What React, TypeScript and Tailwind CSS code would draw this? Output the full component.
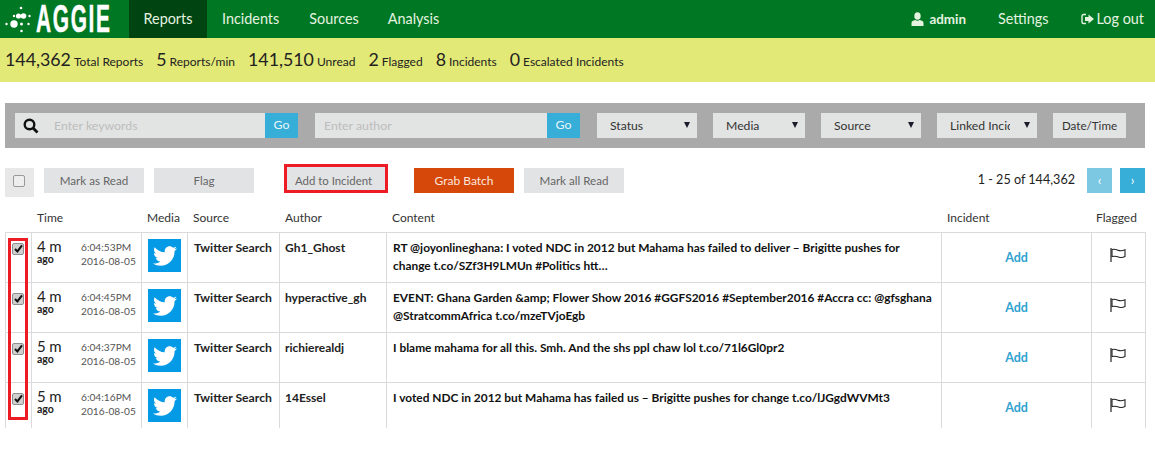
import React from 'react';
import { FaTwitter } from 'react-icons/fa';

const reports = [
  {
    age: '4 m',
    time: '6:04:53PM',
    author: 'Gh1_Ghost',
    content: 'RT @joyonlineghana: I voted NDC in 2012 but Mahama has failed to deliver – Brigitte pushes for change t.co/SZf3H9LMUn #Politics htt…',
  },
  {
    age: '4 m',
    time: '6:04:45PM',
    author: 'hyperactive_gh',
    content: 'EVENT: Ghana Garden &amp; Flower Show 2016 #GGFS2016 #September2016 #Accra cc: @gfsghana @StratcommAfrica t.co/mzeTVjoEgb',
  },
  {
    age: '5 m',
    time: '6:04:37PM',
    author: 'richierealdj',
    content: 'I blame mahama for all this. Smh. And the shs ppl chaw lol t.co/71l6Gl0pr2',
  },
  {
    age: '5 m',
    time: '6:04:16PM',
    author: '14Essel',
    content: 'I voted NDC in 2012 but Mahama has failed us – Brigitte pushes for change t.co/lJGgdWVMt3',
  },
];

const stats = [
  ['144,362', 'Total Reports'],
  ['5', 'Reports/min'],
  ['141,510', 'Unread'],
  ['2', 'Flagged'],
  ['8', 'Incidents'],
  ['0', 'Escalated Incidents'],
];

const Logo = () => (
  <div className="flex items-center shrink-0 w-[129px] pl-[4px]">
    <svg className="shrink-0" width="30" height="38" viewBox="4 0 30 38" fill="#fff">
      <circle cx="21" cy="8" r="1.3" />
      <circle cx="14" cy="16" r="1.2" />
      <circle cx="18.5" cy="16" r="2.6" />
      <circle cx="23.5" cy="16" r="2.8" />
      <circle cx="29.5" cy="16" r="1.2" />
      <circle cx="6.5" cy="24" r="1.2" />
      <circle cx="14" cy="24" r="3.7" />
      <circle cx="21.5" cy="24" r="1.5" />
      <circle cx="28.5" cy="24" r="1.2" />
      <circle cx="21.5" cy="31" r="1.3" />
    </svg>
    {/* natural width is wider than it looks, the negative margin takes back what scale-x removes */}
    <span className="shrink-0 ml-[2px] -mr-[62px] text-[38px] leading-[38px] text-white font-bold tracking-[3px] origin-left scale-x-[0.55] [-webkit-text-stroke:0.5px_white] font-['Liberation_Sans',sans-serif]">
      AGGIE
    </span>
  </div>
);

const Caret = () => (
  <span className="absolute right-[7px] top-[9px] w-0 h-0 border-x-[3px] border-x-transparent border-t-[6px] border-t-[#1a1a2a]" />
);

const Select = ({ label, width }: { label: string; width: string }) => (
  <div className={`relative flex items-center h-[25px] bg-[#e2e3e3] pl-[13px] pt-[2px] text-[12.2px] text-[#333] ${width}`}>
    <span className="whitespace-nowrap">{label}</span>
    <Caret />
  </div>
);

const SoftButton = ({ label, className = 'w-[100px]' }: { label: string; className?: string }) => (
  <button className={`h-[25px] pt-[1px] bg-[#e2e3e5] text-[11.6px] text-[#666] ${className}`}>{label}</button>
);

const FlagIcon = () => (
  <svg className="block" width="16" height="14" viewBox="0 0 16 14" fill="none">
    <path d="M1 0V14" stroke="#333" strokeWidth="1.3" />
    <path d="M2 1.5C4.5 0.6 6.5 1.6 8.5 2.4C10.5 3 13 2.6 15 1.8V8.6C13 9.6 10.5 9.8 8.5 9C6.5 8.2 4.5 7.8 2 8.6Z" stroke="#222" strokeWidth="1.1" />
  </svg>
);

const RowCheckbox = () => (
  <span className="relative block w-[12px] h-[12px] mt-[10px]">
    <input
      type="checkbox"
      defaultChecked
      className="block w-[12px] h-[12px] appearance-none rounded-[2px] border border-[#8f8f8f] bg-[#cfcfcf]"
    />
    <svg className="absolute left-[2px] top-[1px] pointer-events-none" width="9" height="9" viewBox="0 0 9 9" fill="none">
      <path d="M1 5L3.4 7.4L8 1.4" stroke="#111" strokeWidth="2" />
    </svg>
  </span>
);

const Row = ({ r, last }: { r: (typeof reports)[number]; last: boolean }) => (
  <div className={`flex border-x border-[#dadada] text-[#222] ${last ? 'h-[45px]' : 'h-[50px] border-b'}`}>
    <div className="w-[25px] flex justify-center pr-[1px]">
      <RowCheckbox />
    </div>
    <div className="w-[110px] border-l border-[#dadada] flex pl-[5px] pt-[5px]">
      <div className="w-[44px]">
        <div className="text-[15px] leading-[16px] tracking-[-0.2px]">{r.age}</div>
        <div className="text-[10.5px] leading-[10px] font-bold">ago</div>
      </div>
      <div className="text-[10.2px] leading-[14px] pt-[2px] text-[#555] whitespace-nowrap">
        <div>{r.time}</div>
        <div>2016-08-05</div>
      </div>
    </div>
    <div className="w-[46px] border-l border-[#dadada] pl-[6px] pt-[6px]">
      <div className="w-[33px] h-[33px] bg-[#049ae5] flex items-center justify-center">
        <FaTwitter className="text-white text-[24px]" />
      </div>
    </div>
    <div className="w-[92px] border-l border-[#dadada] pl-[6px] pt-[6px] text-[12.2px] leading-[18px] font-bold whitespace-nowrap">
      Twitter Search
    </div>
    <div className="w-[107px] border-l border-[#dadada] pl-[5px] pt-[6px] text-[12px] leading-[18px] font-bold">
      {r.author}
    </div>
    <div className="w-[555px] border-l border-[#dadada] pl-[6px] pr-[4px] pt-[6px] text-[11.9px] leading-[18px] font-bold text-[#111]">
      {r.content}
    </div>
    <div className="w-[150px] border-l border-[#dadada] flex justify-center pt-[16px] text-[12.5px] leading-[18px] font-bold text-[#2fa2cf]">
      Add
    </div>
    <div className="flex-1 border-l border-[#dadada] flex justify-center pt-[15px] pr-[1px]">
      <div>
        <FlagIcon />
      </div>
    </div>
  </div>
);

export default function App() {
  return (
    <div className="relative w-[1155px] h-[463px] overflow-hidden bg-white font-['Lato',sans-serif] text-[#333]">
      {/* Top nav */}
      <nav className="flex h-[38px] bg-[#007722] text-[14.4px] text-[#e4f3e0]">
        <Logo />
        <a className="flex items-center justify-center w-[78px] bg-[#004411]">Reports</a>
        <a className="flex items-center ml-[15px]">Incidents</a>
        <a className="flex items-center ml-[30px]">Sources</a>
        <a className="flex items-center ml-[29px]">Analysis</a>
        <div className="flex items-center ml-auto pr-[11px]">
          <svg width="13" height="14" viewBox="0 0 13 14" fill="#e4f3e0">
            <ellipse cx="6.5" cy="4" rx="3.2" ry="3.8" />
            <path d="M0.5 14V10.8C0.5 9.4 2 8.6 4.4 8C5.4 9 7.6 9 8.6 8C11 8.6 12.5 9.4 12.5 10.8V14Z" />
          </svg>
          <b className="ml-[5px] text-[13.4px] font-bold">admin</b>
          <span className="ml-[32px]">Settings</span>
          <svg className="ml-[32px]" width="13" height="12" viewBox="0 0 13 12" fill="none">
            <path d="M5 1.5H2.5C1.5 1.5 1 2 1 3V9C1 10 1.5 10.5 2.5 10.5H5" stroke="#e4f3e0" strokeWidth="1.4" />
            <path d="M7.5 1.5L13 6L7.5 10.5V8H4V4H7.5Z" fill="#e4f3e0" />
          </svg>
          <span className="ml-[3px]">Log out</span>
        </div>
      </nav>

      {/* Stats */}
      <div className="flex items-center h-[44px] bg-[#e3e976] pl-[5px] pb-[1px] text-[#222]">
        {stats.map(([n, l]) => (
          <div key={l} className="flex items-baseline mr-[13px]">
            <span className="text-[17.8px]">{n}</span>
            <span className="ml-[3px] text-[12px]">{l}</span>
          </div>
        ))}
      </div>

      {/* Filters */}
      <div className="flex items-center h-[45px] w-[1140px] mt-[21px] ml-[5px] bg-[#aaaaaa] pl-[10px] text-[12.3px]">
        <div className="flex items-center w-[250px] h-[25px] pt-[1px] bg-[#e2e3e3]">
          <svg className="ml-[8px]" width="16" height="16" viewBox="0 0 16 16" fill="none">
            <circle cx="6.5" cy="6.5" r="4.8" stroke="#111" strokeWidth="2.4" />
            <path d="M10 10L14.5 14.5" stroke="#111" strokeWidth="2.8" />
          </svg>
          <span className="ml-[15px] text-[#bdbdbd]">Enter keywords</span>
        </div>
        <div className="flex items-center justify-center w-[33px] h-[25px] bg-[#37aed7] text-[#e8f5fa]">Go</div>
        <div className="flex items-center w-[232px] h-[25px] pt-[1px] ml-[17px] bg-[#e2e3e3] pl-[9px] text-[#bdbdbd]">Enter author</div>
        <div className="flex items-center justify-center w-[33px] h-[25px] bg-[#37aed7] text-[#e8f5fa]">Go</div>
        <div className="flex gap-[16px] ml-[17px]">
          <Select label="Status" width="w-[100px]" />
          <Select label="Media" width="w-[92px]" />
          <Select label="Source" width="w-[100px]" />
          <div className="relative flex items-center h-[25px] w-[100px] bg-[#e2e3e3] pl-[13px] pt-[2px] text-[12.2px]">
            <span className="w-[60px] overflow-hidden whitespace-nowrap">Linked Incidents</span>
            <Caret />
          </div>
          <div className="flex items-center justify-center w-[73px] h-[25px] bg-[#e2e3e3] text-[11.6px]">Date/Time</div>
        </div>
      </div>

      {/* Actions */}
      <div className="flex items-start h-[29px] mt-[20px] ml-[5px]">
        <div className="flex items-center justify-center w-[29px] h-[29px] bg-[#e8e8e8]">
          <input type="checkbox" className="block w-[12px] h-[12px] mb-[3px] mr-[1px] appearance-none rounded-[2px] border border-[#999] bg-[#eee]" />
        </div>
        <SoftButton label="Mark as Read" className="w-[100px] ml-[10px]" />
        <SoftButton label="Flag" className="w-[100px] ml-[10px]" />
        <div className="ml-[30px] -mt-[4px] border-[3px] border-[#ed1c24]">
          <SoftButton label="Add to Incident" className="block w-[98px] !h-[23px] !pt-[4px] pr-[5px] !text-[11.4px]" />
        </div>
        <button className="w-[100px] h-[25px] pt-[1px] ml-[26px] bg-[#d6470a] text-[12px] text-[#fbe6dc]">Grab Batch</button>
        <SoftButton label="Mark all Read" className="w-[100px] ml-[10px]" />
        <div className="flex items-center h-[25px] ml-auto pr-[10px]">
          <span className="text-[12.6px] text-[#222]">1 - 25 of 144,362</span>
          <div className="flex items-center justify-center w-[25px] h-[25px] ml-[12px] bg-[#7cc8e3] text-white text-[13px]">‹</div>
          <div className="flex items-center justify-center w-[25px] h-[25px] ml-[8px] bg-[#37aed7] text-white text-[13px]">›</div>
        </div>
      </div>

      {/* Table head */}
      <div className="flex items-end h-[35px] ml-[5px] pb-[5px] text-[12px] text-[#333] w-[1140px]">
        <div className="w-[32px]" />
        <div className="w-[110px]">Time</div>
        <div className="w-[46px]">Media</div>
        <div className="w-[92px]">Source</div>
        <div className="w-[107px]">Author</div>
        <div className="w-[555px]">Content</div>
        <div className="w-[149px]">Incident</div>
        <div>Flagged</div>
      </div>

      {/* Rows */}
      <div className="ml-[5px] w-[1141px] border-t border-[#dadada]">
        {reports.map((r, i) => (
          <Row key={r.time} r={r} last={i === reports.length - 1} />
        ))}
      </div>

      {/* Red highlight round the row checkboxes */}
      <div className="absolute left-[8px] top-[238px] w-[20px] h-[182px] border-[3px] border-[#ed1c24]" />
    </div>
  );
}
